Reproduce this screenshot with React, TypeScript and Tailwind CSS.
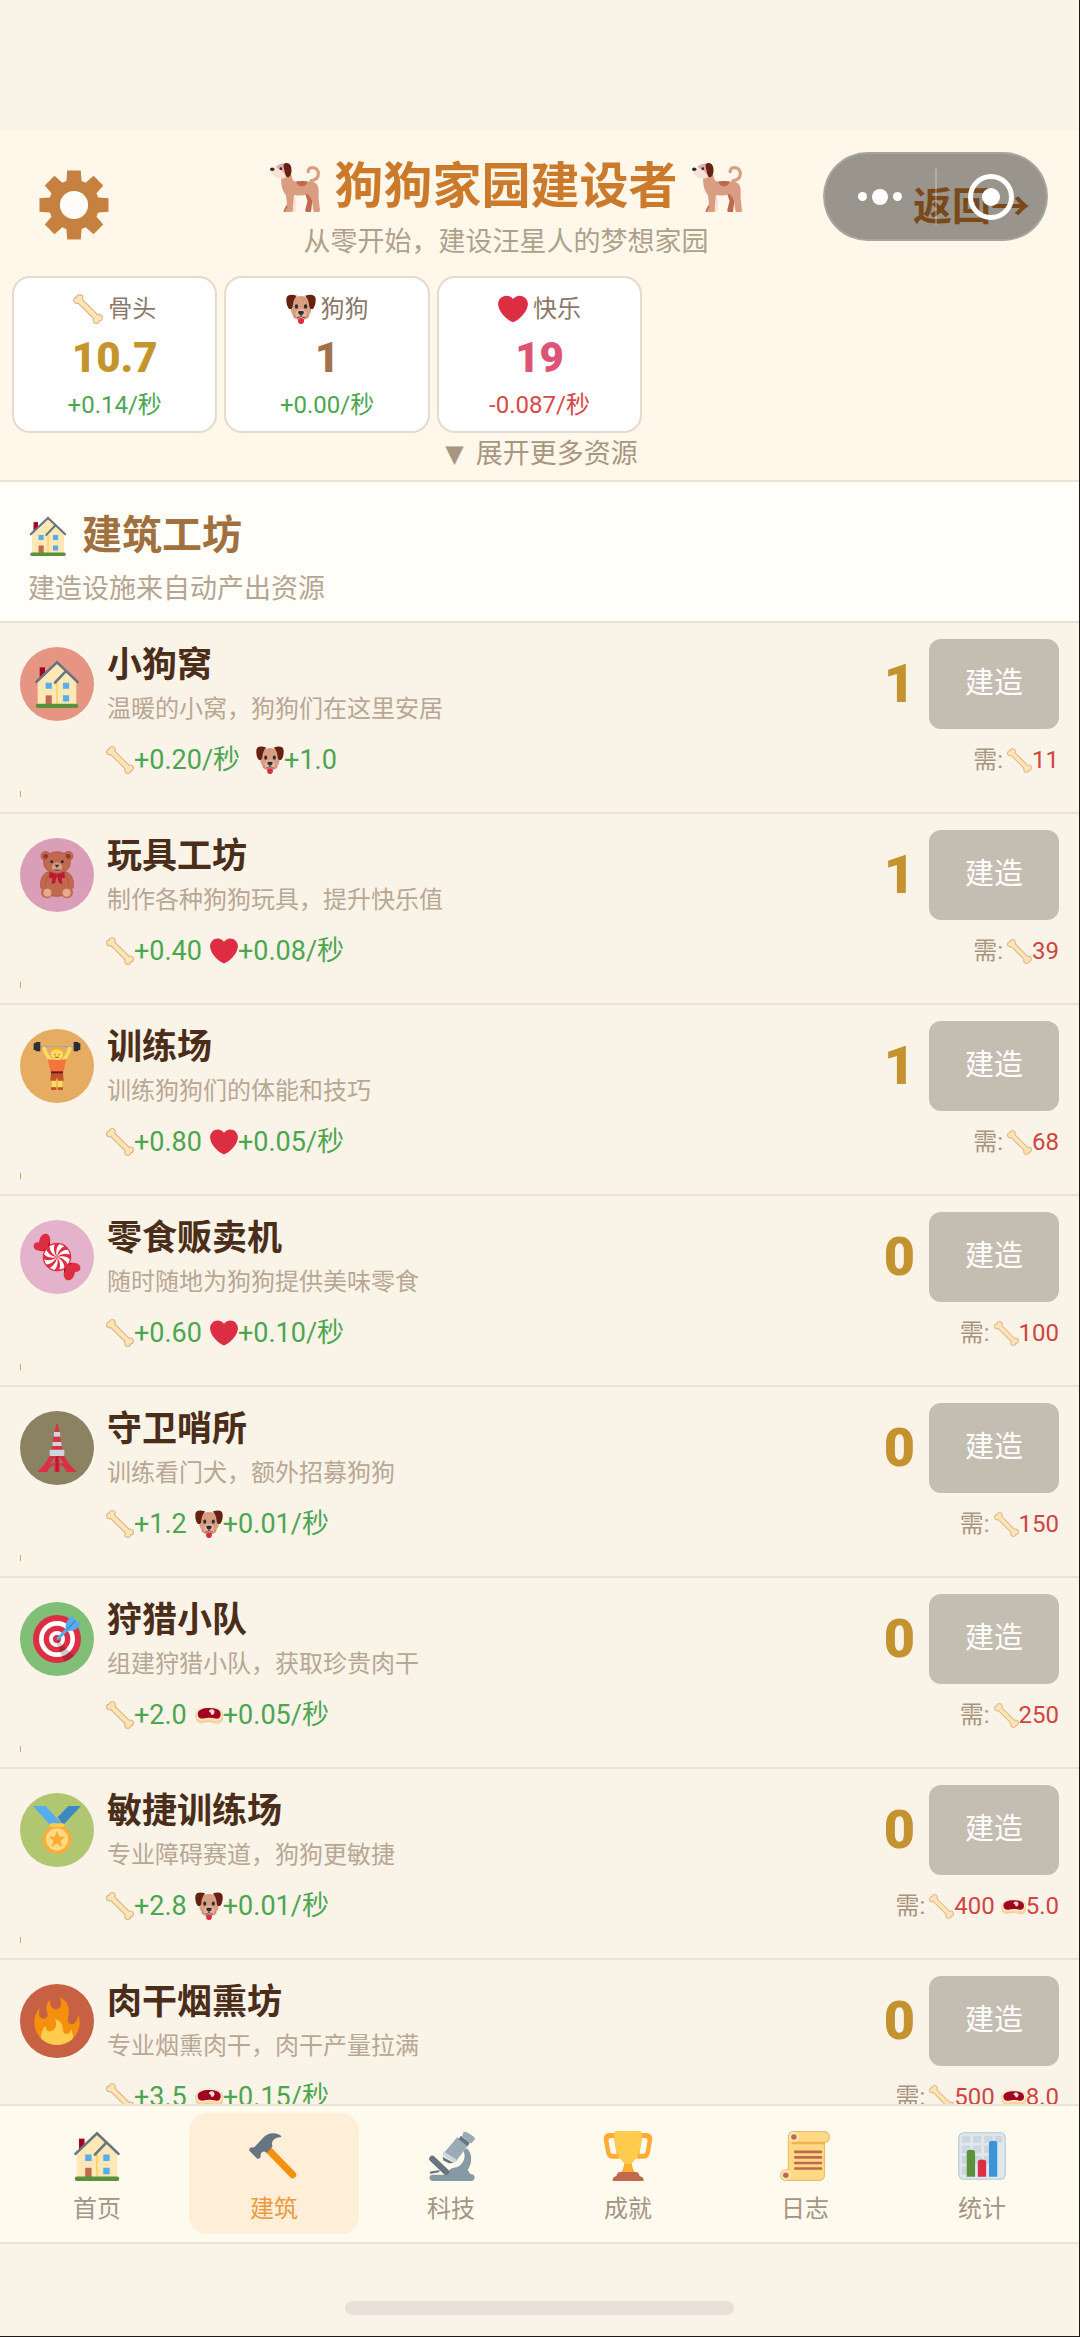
import type { ReactNode } from "react"

type IconProps = { className?: string }

const Svg = ({ className, box = "0 0 36 36", children }: IconProps & { box?: string; children: ReactNode }) => (
    <svg className={className} viewBox={box} aria-hidden="true" xmlns="http://www.w3.org/2000/svg">{children}</svg>
)

const Gear = ({ className }: IconProps) => (
    <Svg className={className} box="-36 -36 72 72">
        <g fill="#c68141">
            {[0, 45, 90, 135, 180, 225, 270, 315].map((a) => (
                <path key={a} d="M-8 -22L-7 -35.500H7L8 -22Z" transform={`rotate(${a})`} />
            ))}
            <circle r="26" />
        </g>
        <circle r="14.5" fill="#fffcf7" />
    </Svg>
)

const Bone = ({ className }: IconProps) => (
    <Svg className={className}>
        <g stroke="#d9ad7e" fill="#d9ad7e">
            <path d="M7 7L29 29" strokeWidth="8" />
            <circle cx="4.6" cy="7.6" r="4" /><circle cx="8" cy="4.6" r="4" />
            <circle cx="28" cy="31.4" r="4" /><circle cx="31.4" cy="28.4" r="4" />
        </g>
        <g stroke="#ffe4b5" fill="#ffe4b5" strokeWidth="0">
            <path d="M7 7L29 29" strokeWidth="5.6" />
            <circle cx="4.6" cy="7.6" r="3.2" /><circle cx="8" cy="4.6" r="3.2" />
            <circle cx="28" cy="31.4" r="3.2" /><circle cx="31.4" cy="28.4" r="3.2" />
        </g>
    </Svg>
)

const DogFace = ({ className }: IconProps) => (
    <Svg className={className}>
        <path fill="#dd2e44" d="M14.5 29h7v3.4a3.5 3.5 0 0 1-7 0z" />
        <path fill="#d99e82" d="M18 2.500C9 2.500 6 7 5.500 14c-.4 6 1 10 4 12.500C11.500 30 15 31 18 31s6.500-1 8.500-4.500c3-2.500 4.400-6.500 4-12.500C30 7 27 2.500 18 2.500z" />
        <path fill="#c1694f" opacity=".6" d="M8 27c2 3 6 4.500 10 4.500S26 30 28 27c-2-4-6-3-10-3s-8-1-10 3z" />
        <path fill="#e6b39a" d="M11 25c0-4 3-7 7-7s7 3 7 7-3 5.500-7 5.500-7-1.500-7-5.500z" />
        <path fill="#662113" d="M13 2C6-.5 1 1 .5 5c-.4 4 .2 9 2.500 12 1.800 2.200 4.500 1 5-2 .5-4.500 1-9 5-13zM23 2c7-2.500 12-1 12.500 3 .4 4-.2 9-2.500 12-1.800 2.200-4.500 1-5-2-.5-4.500-1-9-5-13z" />
        <ellipse cx="12.500" cy="15" rx="2" ry="2.700" fill="#292f33" />
        <ellipse cx="23.500" cy="15" rx="2" ry="2.700" fill="#292f33" />
        <path fill="#292f33" d="M14.500 21.500c0-1.500 7-1.500 7 0 0 2-2 3.700-3.500 3.700s-3.500-1.700-3.500-3.700z" />
        <path d="M13 28c2 .8 4.500 0 5-2.500.5 2.500 3 3.300 5 2.500" fill="none" stroke="#292f33" strokeWidth="1" />
        <circle cx="18" cy="32" r="3.300" fill="#dd2e44" />
    </Svg>
)

const Heart = ({ className }: IconProps) => (
    <Svg className={className}>
        <path fill="#dd2e44" d="M35.885 11.833c0-5.450-4.418-9.868-9.867-9.868-3.308 0-6.227 1.633-8.018 4.129-1.791-2.496-4.710-4.129-8.017-4.129-5.450 0-9.868 4.417-9.868 9.868 0 .772.098 1.520.266 2.241C1.751 22.587 11.216 31.568 18 34.034c6.783-2.466 16.249-11.447 17.617-19.959.17-.721.268-1.469.268-2.242z" />
    </Svg>
)

const Meat = ({ className }: IconProps) => (
    <Svg className={className}>
        <path fill="#ffd9a0" stroke="#e8b77c" strokeWidth=".8" d="M1 18c0-6 6-10 17-10s17 3 17.500 9c.5 3 .3 6-1 8.500-1.500 3.500-7 3.500-10.500 2-4-1.500-9-1.500-13 0C5 29.500 1 26 1 18z" />
        <path fill="#fff0d6" d="M2 16C3 10 9 7.500 18 7.500S34 10.500 34.500 16c.5 6-2 9.500-8 8-5-1.500-10-1.500-15 0C5 25.500 1.500 22 2 16z" />
        <path fill="#a0041e" d="M3.500 16c.5-4.500 6-7 14.500-7s14.500 2 15 7-2 7.500-7 6.500c-5-1.300-10-1.300-15 0-5 1-8-2-7.500-6.500z" />
        <path fill="#f4dfd6" d="M18 13c1-3 6-3 7 0 .5 2.500-1 5-3 5-1.500 0-1-2-2-3-.8-.7-2.300-.7-2-2z" />
    </Svg>
)

const House = ({ className }: IconProps) => (
    <Svg className={className}>
        <path fill="#a0041e" d="M5 5.500h4v9H5z" />
        <path fill="#ffe8b6" d="M18 2L3.500 16v18h29V16z" />
        <path d="M18 16v17.500" stroke="#ffcc4d" />
        <path d="M2.500 16.500L18 1.700l15.500 14.800M24.500 8.500L16.500 17" fill="none" stroke="#66757f" strokeWidth="1.900" strokeLinecap="round" />
        <path fill="#55acee" d="M9.500 17h4.600v4.600H9.500zM22.500 17h4.600v4.600h-4.600zM22.500 26.500h4.600v4.600h-4.600z" />
        <path fill="#c1694f" d="M9.500 26.500h4.600V34H9.500z" />
        <rect x="2" y="32.800" width="32" height="3.200" rx="1.500" fill="#5c913b" />
    </Svg>
)

const Dog = ({ className }: IconProps) => (
    <Svg className={className}>
        <path d="M29.500 13.500c3.500-.5 5.300-2.500 5.300-5 0-2.800-2-4.500-4.300-4.500-2 0-3.200 1.300-3 3" fill="none" stroke="#d99e82" strokeWidth="2.300" strokeLinecap="round" />
        <path fill="#c1694f" d="M12 22l1 7-3 5.500c-.5.800 0 1.500 1 1.500h3.500l2.500-7V22zM25 22l2 6-1.500 6c-.3 1.200 0 2 1 2h3l1-8-2-6z" />
        <path fill="#d99e82" d="M8 7c3-3 7-1.500 7.500 3 .5 3 1.500 4 4 4h9c4 0 6.500 2 6.500 6v6l1 9c0 .7-.4 1-1 1h-3.500l-.5-2.500-1-7-3-3.500c-4 1.500-7 1.500-10 .5l-.5 5v6.500c0 .6-.4 1-1 1h-4c-.8 0-.8-1-.2-1.600l1.200-1.400-1-9C8.500 20 8 16 8 12z" />
        <path fill="#fbe0d3" d="M1 5l6-2.500c4-1 6 1 6 4 0 4-2 5.500-5 5.500-2.500 0-4.500-1-6.500-3.500C.8 7.500.5 6 1 5zM17 25l1.500.300v10c0 .4-.3.700-1 .700H16.500z" />
        <path fill="#e6aaaa" d="M4 3.500C6 1.500 9 .5 11.500 1.500L12 10 8 6z" />
        <path fill="#662113" d="M10.500 1c3-1.200 5 1 5 5 0 2.500-1 5-2.500 5s-2-2-2.500-4.500C10.200 4.500 9 2 10.500 1z" />
        <circle cx="7.800" cy="4.800" r="1" fill="#292f33" />
        <ellipse cx="1.600" cy="5.200" rx="1.600" ry="1.300" fill="#292f33" />
        <path fill="#c1694f" d="M19 14c2-.5 6-.5 8 0 0 2-2 3.500-4 3.500s-4-1.500-4-3.500z" />
    </Svg>
)

const Bear = ({ className }: IconProps) => (
    <Svg className={className}>
        <g fill="#c1694f" stroke="#a5523b" strokeWidth=".5">
            <circle cx="9.500" cy="3.800" r="3.500" /><circle cx="26.500" cy="3.800" r="3.500" />
            <path d="M10 16c-4 3-5 7-4 12h24c1-5 0-9-4-12z" />
            <path d="M9 31c0-10 2-16 9-16s9 6 9 16c-3 4-15 4-18 0z" />
            <ellipse cx="18" cy="8.800" rx="10" ry="8.300" />
        </g>
        <circle cx="9.500" cy="4" r="1.800" fill="#8a3b24" /><circle cx="26.500" cy="4" r="1.800" fill="#8a3b24" />
        <ellipse cx="18" cy="12" rx="4" ry="3.300" fill="#d99e82" />
        <circle cx="14" cy="8" r="1.100" fill="#292f33" /><circle cx="22" cy="8" r="1.100" fill="#292f33" />
        <path fill="#292f33" d="M16.200 10.300h3.600L18 12.600z" />
        <path d="M16 14c1.300.6 2.700.6 4 0" fill="none" stroke="#292f33" strokeWidth=".7" />
        <path fill="#be1931" d="M12.500 15.500l5.500 2 5.500-2 .5 5-2.500-.5.500 5-2.500-1L18 18.500 16.500 24l-2.500 1 .5-5-2.500.5z" />
        <circle cx="10.500" cy="31" r="4.500" fill="#c1694f" /><circle cx="25.500" cy="31" r="4.500" fill="#c1694f" />
        <circle cx="10.800" cy="31.300" r="3" fill="#e6aa8c" /><circle cx="25.200" cy="31.300" r="3" fill="#e6aa8c" />
    </Svg>
)

const Lifter = ({ className }: IconProps) => (
    <Svg className={className}>
        <path d="M3 3.500h30" stroke="#99aab5" strokeWidth="1" />
        <path d="M8.500 5c1 4 3 7 6 10M27.500 5c-1 4-3 7-6 10" fill="none" stroke="#ffdc5d" strokeWidth="2.800" strokeLinecap="round" />
        <path fill="#292f33" d="M.5 1H2V0h3.500v7H2V6H.5zM35.500 1H34V0h-3.500v7H34V6h1.500z" />
        <path fill="#ffdc5d" d="M14 27h3.500v7H14zM18.500 27H22v7h-3.500z" />
        <path fill="#f4743b" d="M11 13l5 .5h4l5-.5-2.500 10h-9z" />
        <path fill="#c3512a" d="M13.500 22.500h9L23 29h-4.300L18 26l-.7 3H13z" />
        <path fill="#662113" d="M13.500 22h9v1.500h-9z" />
        <circle cx="18" cy="9" r="4.600" fill="#ffdc5d" />
        <path fill="#ffac33" d="M13.200 8.500C13 5 15 3.500 18 3.500s5 1.500 4.800 5c-1-2-2.800-2.800-4.800-2.800s-3.800.8-4.800 2.800z" />
        <path d="M16.500 9v1M19.500 9v1M16.500 11.500h3" stroke="#a5523b" strokeWidth=".8" />
        <path fill="#c3512a" d="M13.500 34h4v2h-4zM18.500 34h4v2h-4z" />
    </Svg>
)

const Candy = ({ className }: IconProps) => (
    <Svg className={className}>
        <path fill="#dd2e44" d="M12 12L7.500 13.500C5 14 1 13 .5 10.500 0 8 2 6.500 4.500 7 5 3 7 .5 9.500.5c2 0 3.500 2 3.500 4.500zM24 24l4.500-1.500c2.500-.5 6.500.5 7 3 .5 2.500-1.500 4-4 3.500-.5 4-2.500 6.500-5 6.500-2 0-3.500-2-3.500-4.500z" />
        <path fill="#a0041e" d="M12.500 6L13 13 6.500 13.500l4-2zM23.500 30L23 23l6.500-.5-4 2z" />
        <circle cx="18" cy="18" r="10.700" fill="#dd2e44" />
        <g fill="#fff">
            {[0, 45, 90, 135, 180, 225, 270, 315].map((a) => (
                <path key={a} d="M18 18C17 14 17.500 10.500 20 8.300L23.500 9.900C20.500 11.500 18.500 14 18 18z" transform={`rotate(${a} 18 18)`} />
            ))}
        </g>
    </Svg>
)

const Tower = ({ className }: IconProps) => (
    <Svg className={className}>
        <path fill="#dd2e44" d="M17.400 0h1.200l.4 3 1 3h-4l1-3z" />
        <path fill="#ccd6dd" d="M15.800 6h4.400l.3 3.500h-5z" />
        <path fill="#dd2e44" d="M15.300 9.500h5.400l.3 4h-6z" />
        <path fill="#ccd6dd" d="M14.800 13.500h6.400l.3 3h-7z" />
        <path fill="#dd2e44" d="M14.300 16.500h7.400l.5 3h-8.400z" />
        <path fill="#dd2e44" fillRule="evenodd" d="M13 23h10c2.500 5 5.500 9 10 13h-8c-.5-3-3-5-5-5v5h-4v-5c-2 0-4.500 2-5 5H3c4.500-4 7.500-8 10-13zm3.300 2L13 29.500h3.300zm3.400 0v4.500H23z" />
        <path fill="#be1931" d="M17 24h2v12h-2z" />
        <rect x="12.500" y="19.300" width="11" height="4.700" rx=".6" fill="#ccd6dd" />
    </Svg>
)

const Target = ({ className }: IconProps) => (
    <Svg className={className}>
        <circle cx="18" cy="18" r="18" fill="#dd2e44" />
        <circle cx="18" cy="18" r="13.500" fill="#fff" />
        <circle cx="18" cy="18" r="10" fill="#dd2e44" />
        <circle cx="18" cy="18" r="6" fill="#fff" />
        <circle cx="18" cy="18" r="3" fill="#dd2e44" />
        <path opacity=".2" d="M18.200 18.300l12.400 12.500a18 18 0 0 1-7 4.300L18 22z" />
        <path fill="#c1694f" d="M17 19.500l1.200-3 1.500 1.500z" />
        <path d="M19 17.500L29 7" stroke="#55acee" strokeWidth="2.400" strokeLinecap="round" />
        <path fill="#55acee" d="M24.500 10.500C24 6 26 2 30.500.5L31 5l4.500.5C35 10 30.500 12.500 26 12z" />
        <path d="M25.500 11L32 4" stroke="#3b88c3" strokeWidth="1" />
    </Svg>
)

const Medal = ({ className }: IconProps) => (
    <Svg className={className}>
        <path fill="#55acee" d="M0 0h9.500l13 14.500H13z" />
        <path fill="#3b88c3" d="M36 0h-9.500L18.500 8.500l4 6z" />
        <circle cx="18" cy="25" r="10.700" fill="#ffac33" />
        <circle cx="18" cy="25" r="8.300" fill="#ffd983" />
        <path fill="#ffac33" d="M18 18.500l1.700 4.400 4.700.2-3.700 3 1.300 4.600-4-2.600-4 2.600 1.300-4.600-3.700-3 4.700-.2z" />
        <rect x="12.500" y="13" width="11" height="2.800" rx="1.400" fill="#ffcc4d" />
    </Svg>
)

const Flame = ({ className }: IconProps) => (
    <Svg className={className}>
        <path fill="#f4900c" d="M35 19c0-2.062-.367-4.039-1.040-5.868-.46 5.389-3.333 8.157-6.335 6.868-2.812-1.208-.917-5.917-.777-8.164.236-3.809-.012-8.169-6.931-11.794 2.875 5.500.333 8.917-2.333 9.125-2.958.231-5.667-2.542-4.667-7.042-3.238 2.386-3.332 6.402-2.333 9 1.042 2.708-.042 4.958-2.583 5.208-2.840.280-4.418-3.041-2.963-8.333C2.520 10.965 1 14.805 1 19c0 9.389 7.611 17 17 17s17-7.611 17-17z" />
        <path fill="#ffcc4d" d="M28.394 23.999c.148 3.084-2.561 4.293-4.019 3.709-2.106-.843-1.541-2.291-2.083-5.291s-2.625-5.083-5.708-6c2.250 6.333-1.247 8.667-3.080 9.084-1.872.426-3.753-.001-3.968-4.007C7.352 23.668 6 26.676 6 30c0 .368.023.730.055 1.090C9.125 34.124 13.342 36 18 36s8.875-1.876 11.945-4.910c.032-.36.055-.722.055-1.090 0-2.187-.584-4.236-1.606-6.001z" />
    </Svg>
)

const Hammer = ({ className }: IconProps) => (
    <Svg className={className}>
        <path d="M14 13.500L31.500 31.500" stroke="#f4900c" strokeWidth="5" strokeLinecap="round" />
        <path fill="#66757f" d="M22.500 3C18 .5 13 1.500 10 5L5 10.500c-.8 1-1.500 1.500-2.800 1.300-.7-.1-1.200.2-1.700.8-.6.700-.5 1.400.1 2l5 5c.7.600 1.400.600 2 0 .6-.5.900-1 .8-1.700-.2-1.500.6-2.400 1.600-2.900 1.200-.6 2 .2 2.800.8L17 11c-1.500-3 1-6.500 5.500-6.500.9 0 .9-1 0-1.500z" />
    </Svg>
)

const Microscope = ({ className }: IconProps) => (
    <Svg className={className}>
        <path fill="#8899a6" d="M27 14l2.500-1.500c4 4 4 11 .5 15.500l2 3c2 0 3 1 3 2.500s-1 2.500-2.500 2.500H5c-1.500 0-2.500-.9-2.500-2.300S3.500 31.500 5 31.500h9c2-1 3-5 6-5 6-.5 9.500-7 7-12.500z" />
        <path d="M4.500 20l10 9.500" stroke="#66757f" strokeWidth="4.400" strokeLinecap="round" />
        <path d="M3.500 30L9 29" stroke="#66757f" strokeWidth="1.600" strokeLinecap="round" />
        <path fill="#9aabb6" d="M22.500 4.500l8 5.500-9 12L12 17z" />
        <path fill="#ccd6dd" d="M12.500 14.500l9.500 6-1.500 2.500-8.500-5.500z" />
        <path fill="#66757f" d="M12 18.500l8 4.500-3.500.3-4-2z" />
        <path fill="#66757f" d="M25 3.500l6.500 5-1.500 2.500-6.500-5z" />
        <path fill="#9aabb6" d="M27 .8c1-1.300 9 3.500 8.300 5.200L32.500 9 26 4z" />
    </Svg>
)

const Trophy = ({ className }: IconProps) => (
    <Svg className={className}>
        <path fill="#ffac33" fillRule="evenodd" d="M9 1.500H4.500C2 1.500.500 3.500.500 6l1.800 10c.5 2.500 2 4 4.500 4h5zM8 5l1.800 11.500H7.500c-1.200 0-2-.6-2.200-1.800L4 7.500C3.800 6 4.500 5 6 5zM27 1.500h4.500c2.500 0 4 2 4 4.500l-1.800 10c-.5 2.500-2 4-4.500 4h-5zM28 5l-1.800 11.500h2.300c1.200 0 2-.6 2.200-1.800L32 7.500C32.200 6 31.500 5 30 5z" />
        <path fill="#ffac33" d="M15.500 20h5c0 5 1 8 3 10.500h-11c2-2.500 3-5.500 3-10.500z" />
        <path fill="#ffcc4d" d="M8 2C8 .8 8.600 0 10 0h16c1.400 0 2 .8 2 2 0 8-2 16-6 20-1 1-2 2-4 2s-3-1-4-2C10 18 8 10 8 2z" />
        <path fill="#c1694f" d="M12.500 29.500h11c1.500 0 2 .5 2.500 2l.5 1c2 .5 2.800 1.200 2.800 3.500H7c0-2.300.5-3 2.500-3.500l.500-1c.5-1.500 1-2 2.500-2z" />
    </Svg>
)

const Scroll = ({ className }: IconProps) => (
    <Svg className={className}>
        <path fill="#ffd983" stroke="#e5ab58" strokeWidth=".6" d="M10 .4h22c2.300 0 3.600 1.800 3.600 4S34 8.500 32 8.500V32c0 2.200-1.600 3.600-3.600 3.600H4C1.800 35.600.400 34 .400 31.800S2 28 4 28h2V4.400C6 2 7.500.400 10 .400z" />
        <path fill="#f4b350" d="M8.500 7.800H32V9.500H8.500z" />
        <circle cx="10" cy="4.300" r="3.500" fill="#ffe8b6" /><circle cx="10" cy="4.300" r="2" fill="#c1694f" />
        <circle cx="4.200" cy="31.800" r="3.500" fill="#ffe8b6" /><circle cx="4.200" cy="31.800" r="2" fill="#c1694f" />
        <path d="M11 15h18.500M11 19h18.500M11 23h18.500M11 27h18.500" stroke="#c1694f" strokeWidth="1.900" strokeLinecap="round" />
    </Svg>
)

const Chart = ({ className }: IconProps) => (
    <Svg className={className}>
        <rect x="1.300" y="1.300" width="33.400" height="33.400" rx="3.500" fill="#e1e8ed" stroke="#b4c6d4" strokeWidth=".8" />
        <path fill="#ccd6dd" d="M3.500 3.500h6v5h-6zM11.500 3.500h6v5h-6zM19.500 3.500h6v5h-6zM27.500 3.500h5v5h-5zM3.500 10.500h6v5.500h-6zM11.500 10.500h6v5.500h-6zM19.500 10.500h6v5.500h-6zM3.500 18h6v5.500h-6zM11.500 18h6v5.500h-6zM19.500 18h6v5.500h-6zM3.500 25.500h6v6h-6z" />
        <path fill="#5c913b" d="M7 33V15.500c0-1.500 1-2 3-2s3 .5 3 2V33z" />
        <path fill="#dd2e44" d="M15 33V22.500c0-1.500 1-2 3-2s3 .500 3 2V33z" />
        <path fill="#3b94d9" d="M23 33V9c0-1.500 1-2 3-2s3 .5 3 2v24z" />
    </Svg>
)

type Icon = (p: IconProps) => ReactNode
type Amount = [Icon, string]

const stats = [
    { name: "骨头", icon: Bone, value: "10.7", rate: "+0.14/秒", color: "text-[#c4952f]", rateColor: "text-[#4ca650]" },
    { name: "狗狗", icon: DogFace, value: "1", rate: "+0.00/秒", color: "text-[#a0714a]", rateColor: "text-[#4ca650]" },
    { name: "快乐", icon: Heart, value: "19", rate: "-0.087/秒", color: "text-[#dc5476]", rateColor: "text-[#d9484a]" },
]

const buildings: { name: string; desc: string; icon: Icon; bg: string; count: number; gap: string; makes: Amount[]; cost: Amount[] }[] = [
    { name: "小狗窝", desc: "温暖的小窝，狗狗们在这里安居", icon: House, bg: "bg-[#e79583]", count: 1, gap: "gap-4", makes: [[Bone, "+0.20/秒"], [DogFace, "+1.0"]], cost: [[Bone, "11"]] },
    { name: "玩具工坊", desc: "制作各种狗狗玩具，提升快乐值", icon: Bear, bg: "bg-[#db9eb8]", count: 1, gap: "gap-2", makes: [[Bone, "+0.40"], [Heart, "+0.08/秒"]], cost: [[Bone, "39"]] },
    { name: "训练场", desc: "训练狗狗们的体能和技巧", icon: Lifter, bg: "bg-[#e6ad62]", count: 1, gap: "gap-2", makes: [[Bone, "+0.80"], [Heart, "+0.05/秒"]], cost: [[Bone, "68"]] },
    { name: "零食贩卖机", desc: "随时随地为狗狗提供美味零食", icon: Candy, bg: "bg-[#e5b2cb]", count: 0, gap: "gap-2", makes: [[Bone, "+0.60"], [Heart, "+0.10/秒"]], cost: [[Bone, "100"]] },
    { name: "守卫哨所", desc: "训练看门犬，额外招募狗狗", icon: Tower, bg: "bg-[#8b8261]", count: 0, gap: "gap-2", makes: [[Bone, "+1.2"], [DogFace, "+0.01/秒"]], cost: [[Bone, "150"]] },
    { name: "狩猎小队", desc: "组建狩猎小队，获取珍贵肉干", icon: Target, bg: "bg-[#81be77]", count: 0, gap: "gap-2", makes: [[Bone, "+2.0"], [Meat, "+0.05/秒"]], cost: [[Bone, "250"]] },
    { name: "敏捷训练场", desc: "专业障碍赛道，狗狗更敏捷", icon: Medal, bg: "bg-[#b1c670]", count: 0, gap: "gap-2", makes: [[Bone, "+2.8"], [DogFace, "+0.01/秒"]], cost: [[Bone, "400"], [Meat, "5.0"]] },
    { name: "肉干烟熏坊", desc: "专业烟熏肉干，肉干产量拉满", icon: Flame, bg: "bg-[#c86143]", count: 0, gap: "gap-2", makes: [[Bone, "+3.5"], [Meat, "+0.15/秒"]], cost: [[Bone, "500"], [Meat, "8.0"]] },
]

const tabs = [
    { name: "首页", icon: House },
    { name: "建筑", icon: Hammer },
    { name: "科技", icon: Microscope },
    { name: "成就", icon: Trophy },
    { name: "日志", icon: Scroll },
    { name: "统计", icon: Chart },
]

const Header = () => (
    <header className="relative shrink-0 border-b-2 border-[#ede2d6] bg-[#fff8ea] pb-2">
        <div className="flex items-center px-9 pt-[27px]">
            <button type="button" aria-label="设置" className="flex w-[76px] justify-center pb-2">
                <Gear className="size-[70px]" />
            </button>
            <div className="flex-1 text-center">
                <h1 className="flex items-center justify-center gap-[14px] text-[49px] leading-[60px] font-bold text-[#cb7a2b]">
                    <Dog className="size-[50px]" />
                    狗狗家园建设者
                    <Dog className="size-[50px]" />
                </h1>
                <p className="mt-[7px] text-[27px] leading-[36px] text-[#b0a08a]">从零开始，建设汪星人的梦想家园</p>
            </div>
            <button type="button" className="w-[143px] pb-1 text-center text-[39px] leading-[48px] font-bold whitespace-nowrap text-[#cb7a2b]">返回→</button>
        </div>
        <HostMenu />
        <div className="mt-4 grid grid-cols-5 gap-[7px] px-3">
            {stats.map((s) => (
                <div key={s.name} className="flex flex-col items-center rounded-[18px] border-2 border-[#e5dacd] bg-white pt-[13px] pb-[10px]">
                    <div className="flex items-center gap-[5px] text-2xl leading-[36px] text-[#8a7868]">
                        <s.icon className="size-[30px]" />
                        {s.name}
                    </div>
                    <div className={`text-[42px] leading-[62px] font-black ${s.color}`}>{s.value}</div>
                    <div className={`text-2xl leading-[32px] ${s.rateColor}`}>{s.rate}</div>
                </div>
            ))}
        </div>
        <button type="button" className="mx-auto mt-[3px] flex items-center gap-3 pl-1 text-[27px] leading-[36px] text-[#a8967f]">
            <span className="font-['DejaVu_Sans'] text-2xl leading-[36px]">▼</span>
            展开更多资源
        </button>
    </header>
)

// Mini-program capsule that the host app floats over the page
const HostMenu = () => (
    <div className="absolute top-[22px] right-[31px] flex h-[89px] w-[225px] items-center rounded-full border-2 border-white/15 bg-black/40">
        <button type="button" aria-label="更多" className="flex flex-1 items-center justify-center gap-[5px]">
            <span className="size-[9px] rounded-full bg-white" />
            <span className="size-4 rounded-full bg-white" />
            <span className="size-[9px] rounded-full bg-white" />
        </button>
        <span className="h-14 w-0.5 bg-white/25" />
        <button type="button" aria-label="关闭" className="flex flex-1 items-center justify-center">
            <span className="flex size-[46px] items-center justify-center rounded-full border-5 border-white">
                <span className="size-[18px] rounded-full bg-white" />
            </span>
        </button>
    </div>
)

const BuildingList = () => (
    <ul className="min-h-0 flex-1 overflow-hidden">
        {buildings.map((b) => (
            <li key={b.name} className="border-b-2 border-[#ebe2d6] px-5 pt-4 pb-[15px]">
                <div className="flex items-center">
                    <span className={`flex size-[74px] shrink-0 items-center justify-center rounded-full ${b.bg}`}>
                        <b.icon className="size-[48px]" />
                    </span>
                    <div className="ml-[13px] flex-1 pt-1">
                        <h3 className="text-[35px] leading-[46px] font-bold text-[#4a2e1a]">{b.name}</h3>
                        <p className="text-2xl leading-[40px] text-[#b8a794]">{b.desc}</p>
                    </div>
                    <span className="mr-[14px] text-[54px] leading-[60px] font-black text-[#c4922e]">{b.count}</span>
                    <button type="button" disabled className="h-[90px] w-[130px] rounded-xl bg-[#c4bdb1] text-[29px] text-white">建造</button>
                </div>
                <div className="mt-[14px] flex h-[34px] items-center justify-between">
                    <div className={`ml-[86px] flex items-center text-[27px] text-[#4ca650] ${b.gap}`}>
                        {b.makes.map(([Ico, text]) => (
                            <span key={text} className="flex items-center">
                                <Ico className="size-[28px]" />
                                {text}
                            </span>
                        ))}
                    </div>
                    <div className="flex items-center text-2xl text-[#a8957f]">
                        需:
                        <span className="ml-1 flex items-center gap-1.5 text-[#cf4540]">
                            {b.cost.map(([Ico, text]) => (
                                <span key={text} className="flex items-center">
                                    <Ico className="size-[25px]" />
                                    {text}
                                </span>
                            ))}
                        </span>
                    </div>
                </div>
                <div className="mt-[14px] h-1.5 w-px bg-[#e0a050]" />
            </li>
        ))}
    </ul>
)

const TabBar = () => (
    <nav className="grid shrink-0 grid-cols-6 gap-[7px] border-y-2 border-[#ede4d8] bg-[#fffaee] px-3 pt-[7px] pb-2">
        {tabs.map((t) => (
            <button
                key={t.name}
                type="button"
                className={`flex flex-col items-center rounded-[18px] pt-[18px] pb-2 text-2xl leading-[34px] ${t.name === "建筑" ? "bg-[#ffefd8] text-[#ec9a41]" : "text-[#a39583]"}`}
            >
                <t.icon className="mb-[11px] size-[50px]" />
                {t.name}
            </button>
        ))}
    </nav>
)

export default function App() {
    return (
        <div className="flex h-screen flex-col overflow-hidden border-r border-b border-[#1c1b1a] bg-[#faf3e7] font-[Roboto,'Noto_Sans_CJK_SC',sans-serif]">
            <div className="h-[130px] shrink-0" />
            <Header />
            <main className="flex min-h-0 flex-1 flex-col">
                <div className="shrink-0 border-b-2 border-[#e8e0d4] bg-[#fffef8] px-7 pt-[26px] pb-[14px]">
                    <h2 className="flex items-center gap-[14px] text-[40px] leading-[56px] font-bold text-[#a0713f]">
                        <House className="size-[40px]" />
                        建筑工坊
                    </h2>
                    <p className="mt-[7px] text-[27px] leading-[36px] text-[#b5a592]">建造设施来自动产出资源</p>
                </div>
                <BuildingList />
            </main>
            <TabBar />
            <div className="flex h-[92px] shrink-0 items-end justify-center pb-[21px]">
                <div className="h-[14px] w-[36%] rounded-full bg-[#e8dfd6]" />
            </div>
        </div>
    )
}
